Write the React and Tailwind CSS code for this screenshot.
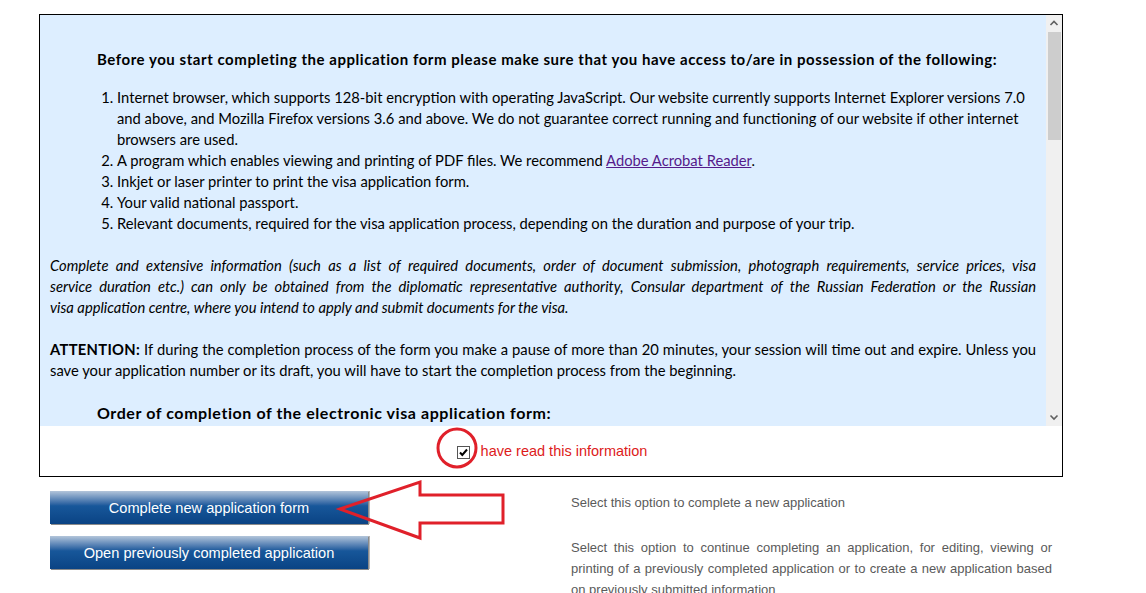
import React from 'react';

const body = "font-['Lato','Noto_Sans',sans-serif]";

function Scrollbar() {
  return (
    <div className="w-[16px] bg-[#f0f0f0] flex flex-col items-center">
      <svg width="16" height="17" viewBox="0 0 16 17" className="shrink-0">
        <path d="M4.5 10 L8 6.5 L11.5 10" fill="none" stroke="#606060" strokeWidth="1.6" />
      </svg>
      <div className="w-[13px] h-[108px] bg-[#cdcdcd]" />
      <div className="flex-1" />
      <svg width="16" height="17" viewBox="0 0 16 17" className="shrink-0">
        <path d="M4.5 6.5 L8 10 L11.5 6.5" fill="none" stroke="#606060" strokeWidth="1.6" />
      </svg>
    </div>
  );
}

// justified block, line breaks as in the original page
function Lines({ lines, className = '' }) {
  return (
    <div className={className}>
      {lines.map((l, i) => (
        <span
          key={i}
          className={i < lines.length - 1 ? 'block whitespace-nowrap text-justify [text-align-last:justify]' : 'block whitespace-nowrap'}
        >
          {l}
        </span>
      ))}
    </div>
  );
}

function Notes() {
  return (
    <div className={`flex-1 bg-[#ddeeff] overflow-hidden pl-[10px] pr-[10px] pt-[34px] text-[14.75px] leading-[21px] text-black ${body}`}>
      <h2 className="ml-[47px] font-bold text-[15px] tracking-[0.55px] mb-[17px] whitespace-nowrap">Before you start completing the application form please make sure that you have access to/are in possession of the following:</h2>
      <ol className="list-decimal pl-[67px] mb-[21px]">
        <li>
          Internet browser, which supports 128-bit encryption with operating JavaScript. Our website currently supports Internet Explorer versions 7.0
          <br />and above, and Mozilla Firefox versions 3.6 and above. We do not guarantee correct running and functioning of our website if other internet
          <br />browsers are used.
        </li>
        <li>A program which enables viewing and printing of PDF files. We recommend <a href="#" className="text-[#551a8b] underline">Adobe Acrobat Reader</a>.</li>
        <li>Inkjet or laser printer to print the visa application form.</li>
        <li>Your valid national passport.</li>
        <li>Relevant documents, required for the visa application process, depending on the duration and purpose of your trip.</li>
      </ol>
      <Lines
        className="italic mb-[21px]"
        lines={[
          'Complete and extensive information (such as a list of required documents, order of document submission, photograph requirements, service prices, visa',
          'service duration etc.) can only be obtained from the diplomatic representative authority, Consular department of the Russian Federation or the Russian',
          'visa application centre, where you intend to apply and submit documents for the visa.',
        ]}
      />
      <Lines
        className="mb-[21px]"
        lines={[
          <><b className="tracking-[0.3px]">ATTENTION:</b> If during the completion process of the form you make a pause of more than 20 minutes, your session will time out and expire. Unless you</>,
          'save your application number or its draft, you will have to start the completion process from the beginning.',
        ]}
      />
      <h2 className="ml-[47px] font-bold text-[16px] tracking-[0.58px] whitespace-nowrap">Order of completion of the electronic visa application form:</h2>
    </div>
  );
}

function BlueButton({ children }) {
  return (
    <button className="w-[318px] h-[33px] shrink-0 pt-[2px] bg-gradient-to-b from-[#b3c5da] via-[#17579a] via-45% to-[#0a4384] text-white text-[14.6px] font-['Liberation_Sans',Arial,sans-serif] shadow-[1px_1px_0_#8a8a8a,2px_0_0_#b5b5b5]">
      {children}
    </button>
  );
}

export default function App() {
  return (
    <div className="relative min-h-[593px] bg-white pt-[14px] pl-[39px] overflow-hidden">
      <div className="w-[1024px] h-[463px] border border-black flex flex-col">
        <div className="flex h-[411px]">
          <Notes />
          <Scrollbar />
        </div>
        <div className="flex-1 flex items-center justify-center pl-[10px] pt-[2px]">
          <label className="flex items-center gap-[11px] text-[14.5px] text-[#dd1b1b] font-['Liberation_Sans',Arial,sans-serif] ml-[-8px]">
            <span className="w-[13px] h-[13px] border border-[#555] bg-white flex items-center justify-center">
              <svg width="11" height="11" viewBox="0 0 11 11">
                <path d="M2 5.5 L4.3 8 L9 2.5" fill="none" stroke="#000" strokeWidth="2" />
              </svg>
            </span>
            have read this information
          </label>
        </div>
      </div>

      <div className="flex flex-col gap-[12px] mt-[14px] ml-[11px] font-['Liberation_Sans',Arial,sans-serif] text-[13px] leading-[21px] text-[#5a5a5a]">
        <div className="flex items-start">
          <BlueButton>Complete new application form</BlueButton>
          <p className="ml-[203px] w-[481px] pt-[1px]">Select this option to complete a new application</p>
        </div>
        <div className="flex items-start">
          <BlueButton>Open previously completed application</BlueButton>
          <p className="ml-[203px] w-[481px] pt-[1px] text-justify">Select this option to continue completing an application, for editing, viewing or printing of a previously completed application or to create a new application based on previously submitted information</p>
        </div>
      </div>

      <svg className="absolute left-0 top-0 pointer-events-none" width="1146" height="593">
        <circle cx="457" cy="448" r="19" fill="none" stroke="#e0202a" strokeWidth="3" />
        <polygon points="340,509 420,482 420,495 503,495 503,523 420,523 420,538" fill="none" stroke="#e0202a" strokeWidth="3" strokeLinejoin="miter" />
      </svg>
    </div>
  );
}
